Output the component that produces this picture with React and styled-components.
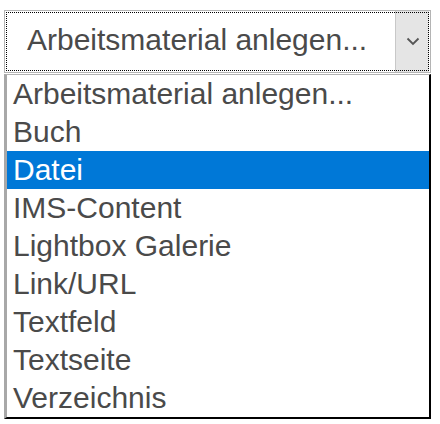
import React from "react";
import styled, { createGlobalStyle } from "styled-components";

const GlobalStyle = createGlobalStyle`
  html, body {
    margin: 0;
    padding: 0;
    background: #fff;
  }
  body {
    font-family: "Liberation Sans", Arial, sans-serif;
  }
`;

const Page = styled("div")`
  padding: 10px 0 0 4px;
  width: 440px;
  box-sizing: border-box;
`;

const SelectBox = styled("div")`
  position: relative;
  width: 427px;
  height: 63px;
  box-sizing: border-box;
  border: 1px solid #b4b4b4;
  display: flex;
  align-items: stretch;
  background: #fff;

  &::after {
    content: "";
    position: absolute;
    inset: 1px;
    border: 1px dotted #000;
    pointer-events: none;
  }
`;

const SelectValue = styled("div")`
  flex: 1;
  display: flex;
  align-items: center;
  padding: 0 0 3px 22px;
  font-size: 30px;
  color: #4a4a4a;
  white-space: nowrap;
`;

const ArrowButton = styled("div")`
  width: 33px;
  background: #e5e5e5;
  border-left: 1px solid #c8c8c8;
  display: flex;
  align-items: center;
  justify-content: center;
  margin-right: 1px;
`;

const List = styled("ul")`
  list-style: none;
  margin: 1px 0 0 0;
  padding: 0;
  width: 427px;
  box-sizing: border-box;
  border-top: 1px solid #b4b4b4;
  border-left: 3px solid #a8a8a8;
  border-right: 2px solid #000;
  border-bottom: 2px solid #000;
  background: #fff;
`;

const Option = styled("li")`
  height: 38px;
  display: flex;
  align-items: center;
  padding-left: 6px;
  font-size: 30px;
  white-space: nowrap;
  color: ${(p) => (p.$selected ? "#fff" : "#4a4a4a")};
  background: ${(p) => (p.$selected ? "#0078d7" : "transparent")};
`;

const Chevron = () => (
  <svg width="14" height="9" viewBox="0 0 14 9">
    <polyline
      points="1.5,1.5 7,7 12.5,1.5"
      fill="none"
      stroke="#555"
      strokeWidth="1.8"
    />
  </svg>
);

const options = [
  "Arbeitsmaterial anlegen...",
  "Buch",
  "Datei",
  "IMS-Content",
  "Lightbox Galerie",
  "Link/URL",
  "Textfeld",
  "Textseite",
  "Verzeichnis",
];

const App = () => {
  const selected = 2;
  return (
    <Page>
      <GlobalStyle />
      <SelectBox>
        <SelectValue>{options[0]}</SelectValue>
        <ArrowButton>
          <Chevron />
        </ArrowButton>
      </SelectBox>
      <List>
        {options.map((o, i) => (
          <Option key={i} $selected={i === selected}>
            {o}
          </Option>
        ))}
      </List>
    </Page>
  );
};

export default App;
